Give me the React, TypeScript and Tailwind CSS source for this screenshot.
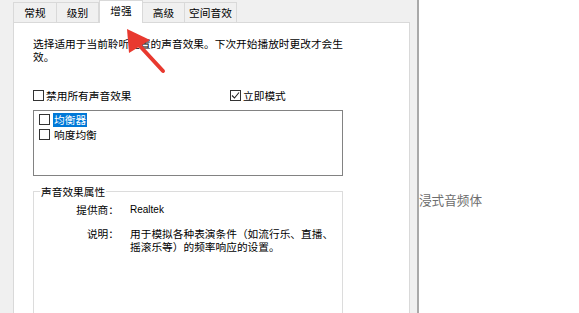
const cjk = "font-['Microsoft_YaHei','Noto_Sans_CJK_SC',sans-serif]"

function Box({ checked = false }: { checked?: boolean }) {
    return (
        <span className="w-[11px] h-[11px] border border-[#333] bg-white flex items-center justify-center shrink-0">
            {checked && (
                <svg width="9" height="9" viewBox="0 0 9 9">
                    <path d="M1 4.5 L3.5 7 L8 1.5" fill="none" stroke="#222" strokeWidth="1.1" />
                </svg>
            )}
        </span>
    )
}

function Tab({ text, w, active = false }: { text: string; w: string; active?: boolean }) {
    if (active) {
        return (
            <div className={`${w} h-[23px] -mb-px z-10 bg-white border border-b-0 border-[#d9d9d9] flex items-center justify-center pb-[3px]`}>
                {text}
            </div>
        )
    }
    return (
        <div className={`${w} h-[20px] bg-[#f0f0f0] border border-b-0 border-l-0 first:border-l border-[#d9d9d9] flex items-center justify-center`}>
            {text}
        </div>
    )
}

export default function App() {
    return (
        <div className={`relative flex w-[579px] h-[313px] overflow-hidden bg-white text-[10.7px] leading-[13px] text-black ${cjk}`}>
            <div className="w-[417px] shrink-0 flex flex-col bg-[#f0f0f0] pl-[13px] pr-[7px]">
                <div className="h-[27px] flex items-end">
                    <Tab text="常规" w="w-[44px]" />
                    <Tab text="级别" w="w-[42px]" />
                    <Tab text="增强" w="w-[44px]" active />
                    <Tab text="高级" w="w-[42px]" />
                    <Tab text="空间音效" w="w-[52px]" />
                </div>

                <div className="flex-1 bg-white border border-b-0 border-[#d9d9d9] pl-[19px]">
                    <div className="mt-[14px] leading-[13px]">
                        <p className="whitespace-nowrap">选择适用于当前聆听配置的声音效果。下次开始播放时更改才会生</p>
                        <p>效。</p>
                    </div>

                    <div className="mt-[26px] flex items-center h-[13px]">
                        <div className="w-[197px] flex items-center gap-[2px]">
                            <Box />
                            <span>禁用所有声音效果</span>
                        </div>
                        <div className="flex items-center gap-[2px]">
                            <Box checked />
                            <span>立即模式</span>
                        </div>
                    </div>

                    <div className="mt-[8px] w-[310px] h-[66px] border border-[#828282] pl-[5px] pt-[1px]">
                        <div className="h-[15px] flex items-center gap-[3px]">
                            <Box />
                            <span className="bg-[#0078d7] text-white px-[1px] h-[14px] leading-[14px]">均衡器</span>
                        </div>
                        <div className="h-[15px] flex items-center gap-[4px]">
                            <Box />
                            <span>响度均衡</span>
                        </div>
                    </div>

                    <fieldset className="mt-[9px] w-[310px] h-[200px] border border-[#dcdcdc]">
                        <legend className="ml-[6px] px-[1px]">声音效果属性</legend>
                        <div className="grid grid-cols-[85px_1fr] gap-x-[11px] mt-[5px]">
                            <span className="text-right">提供商：</span>
                            <span className="font-['Liberation_Sans',sans-serif] text-[10px]">Realtek</span>
                            <span className="text-right mt-[11px]">说明：</span>
                            <div className="mt-[11px] whitespace-nowrap">
                                <p>用于模拟各种表演条件（如流行乐、直播、</p>
                                <p>摇滚乐等）的频率响应的设置。</p>
                            </div>
                        </div>
                    </fieldset>
                </div>
            </div>

            <div className="w-[2px] shrink-0 bg-[#a9a9a9]" />

            <div className="flex-1 pt-[193px] text-[12.6px] leading-[14px] text-[#6d6d6d]">浸式音频体</div>

            <svg className="absolute left-0 top-0 pointer-events-none" width="579" height="313" viewBox="0 0 579 313">
                <line x1="139" y1="45" x2="163" y2="71" stroke="#e8392f" strokeWidth="4" strokeLinecap="round" />
                <polygon points="127,29 129,53 150,40" fill="#e8392f" />
            </svg>
        </div>
    )
}
